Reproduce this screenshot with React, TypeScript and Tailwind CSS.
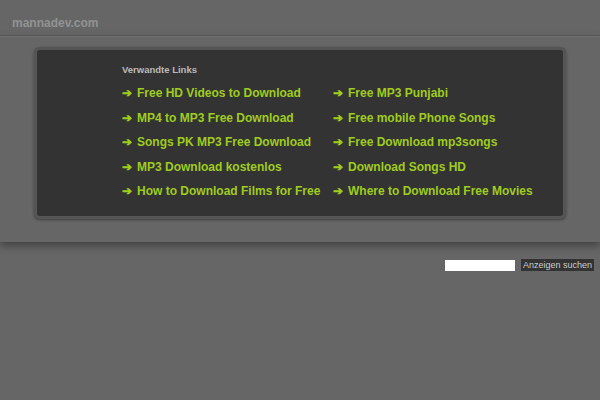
const left = [
  'Free HD Videos to Download',
  'MP4 to MP3 Free Download',
  'Songs PK MP3 Free Download',
  'MP3 Download kostenlos',
  'How to Download Films for Free',
];
const right = [
  'Free MP3 Punjabi',
  'Free mobile Phone Songs',
  'Free Download mp3songs',
  'Download Songs HD',
  'Where to Download Free Movies',
];

function LinkItem({ label }: { label: string }) {
  return (
    <a href="#" className="flex h-[24.5px] items-center whitespace-nowrap text-[12px] font-bold text-[#9fcc1f]">
      <span className="mr-[5px] text-[12px]">➔</span>
      {label}
    </a>
  );
}

export default function App() {
  return (
    <div className="min-h-[400px] bg-[#666] font-['Liberation_Sans',Arial,sans-serif]">
      <div className="flex h-[36px] items-start border-b border-[#5a5a5a] px-[12px] pt-[15px]">
        <span className="text-[12px] font-bold leading-[16px] text-[#939393]">mannadev.com</span>
      </div>
      <div className="border-t border-[#707070] px-[34px] pt-[10px] pb-[23px] shadow-[0_4px_8px_rgba(0,0,0,0.35)]">
        <div className="rounded-[6px] border-[3px] border-[#555] bg-[#333] pl-[85px] pt-[12px] pb-[12px] shadow-[0_1px_3px_rgba(0,0,0,0.4)]">
          <div className="mb-[4px] text-[9.5px] font-bold leading-[15px] text-[#bbb]">Verwandte Links</div>
          <div className="grid grid-cols-[211px_auto]">
            <div>{left.map(l => <LinkItem key={l} label={l} />)}</div>
            <div>{right.map(l => <LinkItem key={l} label={l} />)}</div>
          </div>
        </div>
      </div>
      <div className="flex justify-end gap-[6px] pt-[17px] pr-[6px]">
        <input className="mt-[1px] h-[11px] w-[70px] bg-white" />
        <button className="h-[12px] w-[73px] bg-[#333] text-[9px] leading-[12px] text-[#ccc]">Anzeigen suchen</button>
      </div>
    </div>
  );
}
